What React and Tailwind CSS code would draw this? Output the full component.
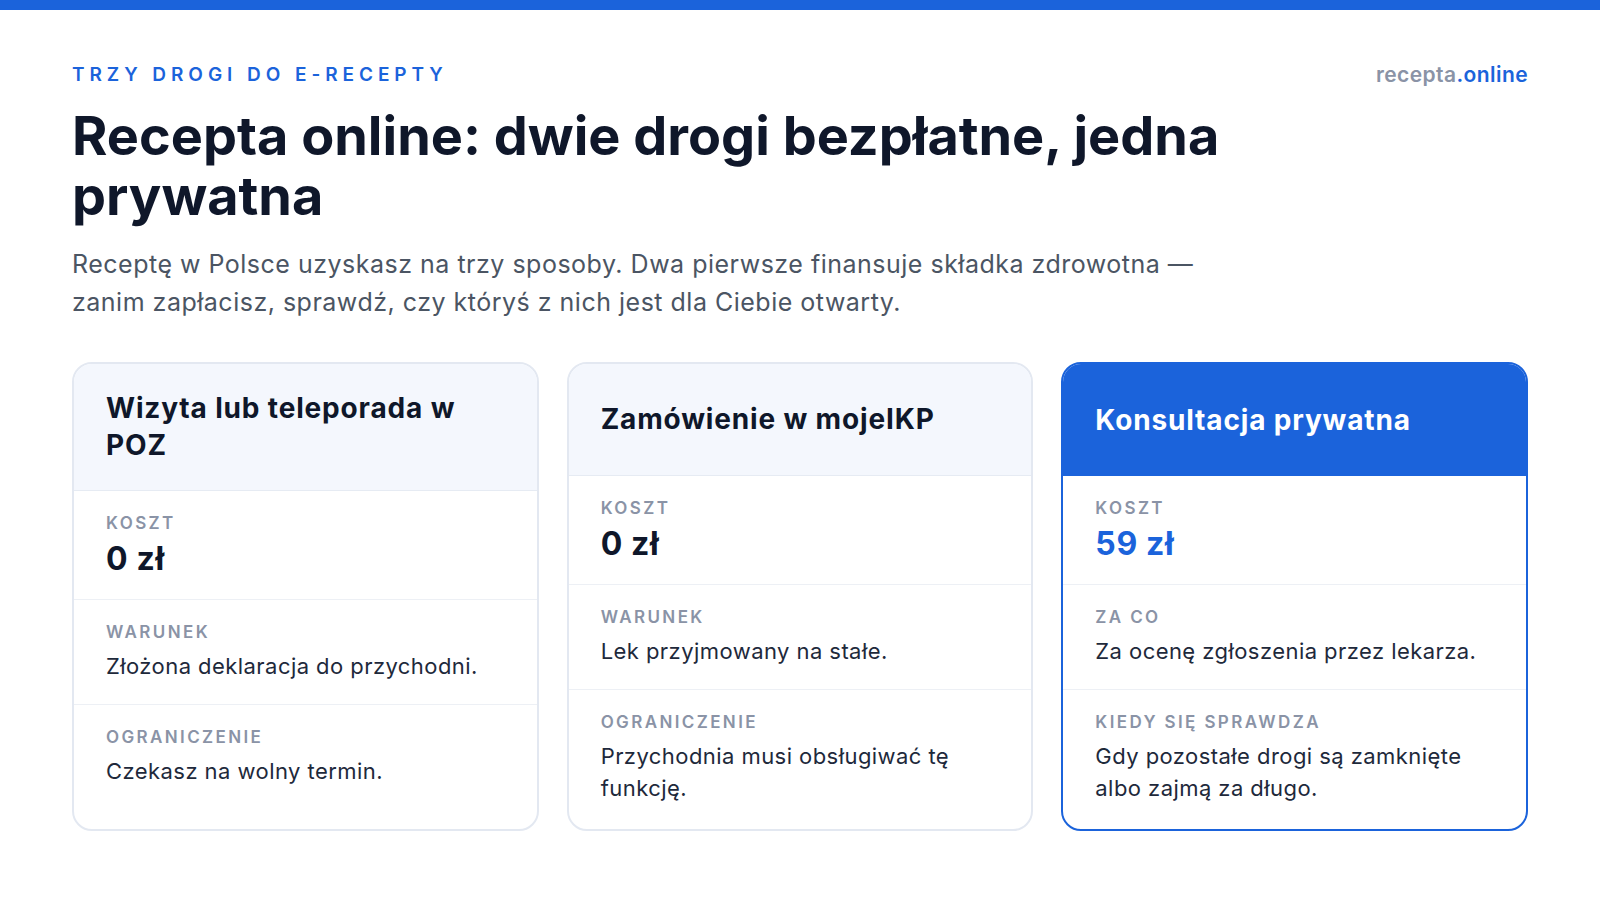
const cards = [
  {
    title: 'Wizyta lub teleporada w POZ',
    rows: [
      { label: 'Koszt', value: '0 zł', price: true },
      { label: 'Warunek', value: 'Złożona deklaracja do przychodni.' },
      { label: 'Ograniczenie', value: 'Czekasz na wolny termin.' },
    ],
  },
  {
    title: 'Zamówienie w mojeIKP',
    rows: [
      { label: 'Koszt', value: '0 zł', price: true },
      { label: 'Warunek', value: 'Lek przyjmowany na stałe.' },
      { label: 'Ograniczenie', value: 'Przychodnia musi obsługiwać tę funkcję.' },
    ],
  },
  {
    title: 'Konsultacja prywatna',
    featured: true,
    rows: [
      { label: 'Koszt', value: '59 zł', price: true },
      { label: 'Za co', value: 'Za ocenę zgłoszenia przez lekarza.' },
      { label: 'Kiedy się sprawdza', value: 'Gdy pozostałe drogi są zamknięte albo zajmą za długo.' },
    ],
  },
];

function Card({ card }) {
  const { title, rows, featured } = card;
  return (
    <div
      className={
        'flex flex-col overflow-hidden rounded-[20px] bg-white ' +
        (featured ? 'border-2 border-[#1b63db]' : 'border-2 border-[#e3e8f1]')
      }
    >
      <div
        className={
          'flex min-h-[112px] items-center px-8 py-[26px] ' +
          (featured ? 'bg-[#1b63db] text-white' : 'bg-[#f4f7fd] border-b border-[#e6ebf3] text-[#0f172a]')
        }
      >
        <h3 className="text-[28px] font-bold leading-[37px] tracking-[0.03em]">{title}</h3>
      </div>
      {rows.map((row, i) => (
        <div
          key={row.label}
          className={
            'px-8 pt-[22px] ' +
            (i < rows.length - 1 ? 'pb-[22px] border-b border-[#edf0f5]' : 'pb-[25px]')
          }
        >
          <p className="mb-2 text-[17px] font-semibold uppercase leading-5 tracking-[0.14em] text-[#8a93a6]">
            {row.label}
          </p>
          {row.price ? (
            <p
              className={
                'text-[32px] font-bold leading-9 tracking-[0.02em] ' +
                (featured ? 'text-[#1b63db]' : 'text-[#0f172a]')
              }
            >
              {row.value}
            </p>
          ) : (
            <p className="text-[22px] leading-8 tracking-[0.02em] text-[#1e293b]">{row.value}</p>
          )}
        </div>
      ))}
    </div>
  );
}

export default function App() {
  return (
    <div className="min-h-[900px] bg-white font-['Inter','Liberation_Sans',sans-serif]">
      <div className="h-[10px] bg-[#1b63db]" />
      <div className="px-[72px] pt-[53px]">
        <div className="flex items-start justify-between">
          <p className="text-[19px] font-semibold uppercase leading-6 tracking-[0.26em] text-[#1b63db]">
            Trzy drogi do e-recepty
          </p>
          <p className="text-[21px] font-semibold leading-6 tracking-[0.02em] text-[#8a93a6]">
            recepta<span className="text-[#1b63db]">.online</span>
          </p>
        </div>
        <h1 className="mt-[19px] max-w-[1190px] text-[54px] font-bold leading-[60px] tracking-[0em] text-[#0f172a]">
          Recepta online: dwie drogi bezpłatne, jedna prywatna
        </h1>
        <p className="mt-[19px] max-w-[1180px] text-[25px] leading-[38px] tracking-[0.02em] text-[#4b5563]">
          Receptę w Polsce uzyskasz na trzy sposoby. Dwa pierwsze finansuje składka zdrowotna — zanim
          zapłacisz, sprawdź, czy któryś z nich jest dla Ciebie otwarty.
        </p>
        <div className="mt-[41px] grid grid-cols-3 gap-7">
          {cards.map((c) => (
            <Card key={c.title} card={c} />
          ))}
        </div>
      </div>
    </div>
  );
}
